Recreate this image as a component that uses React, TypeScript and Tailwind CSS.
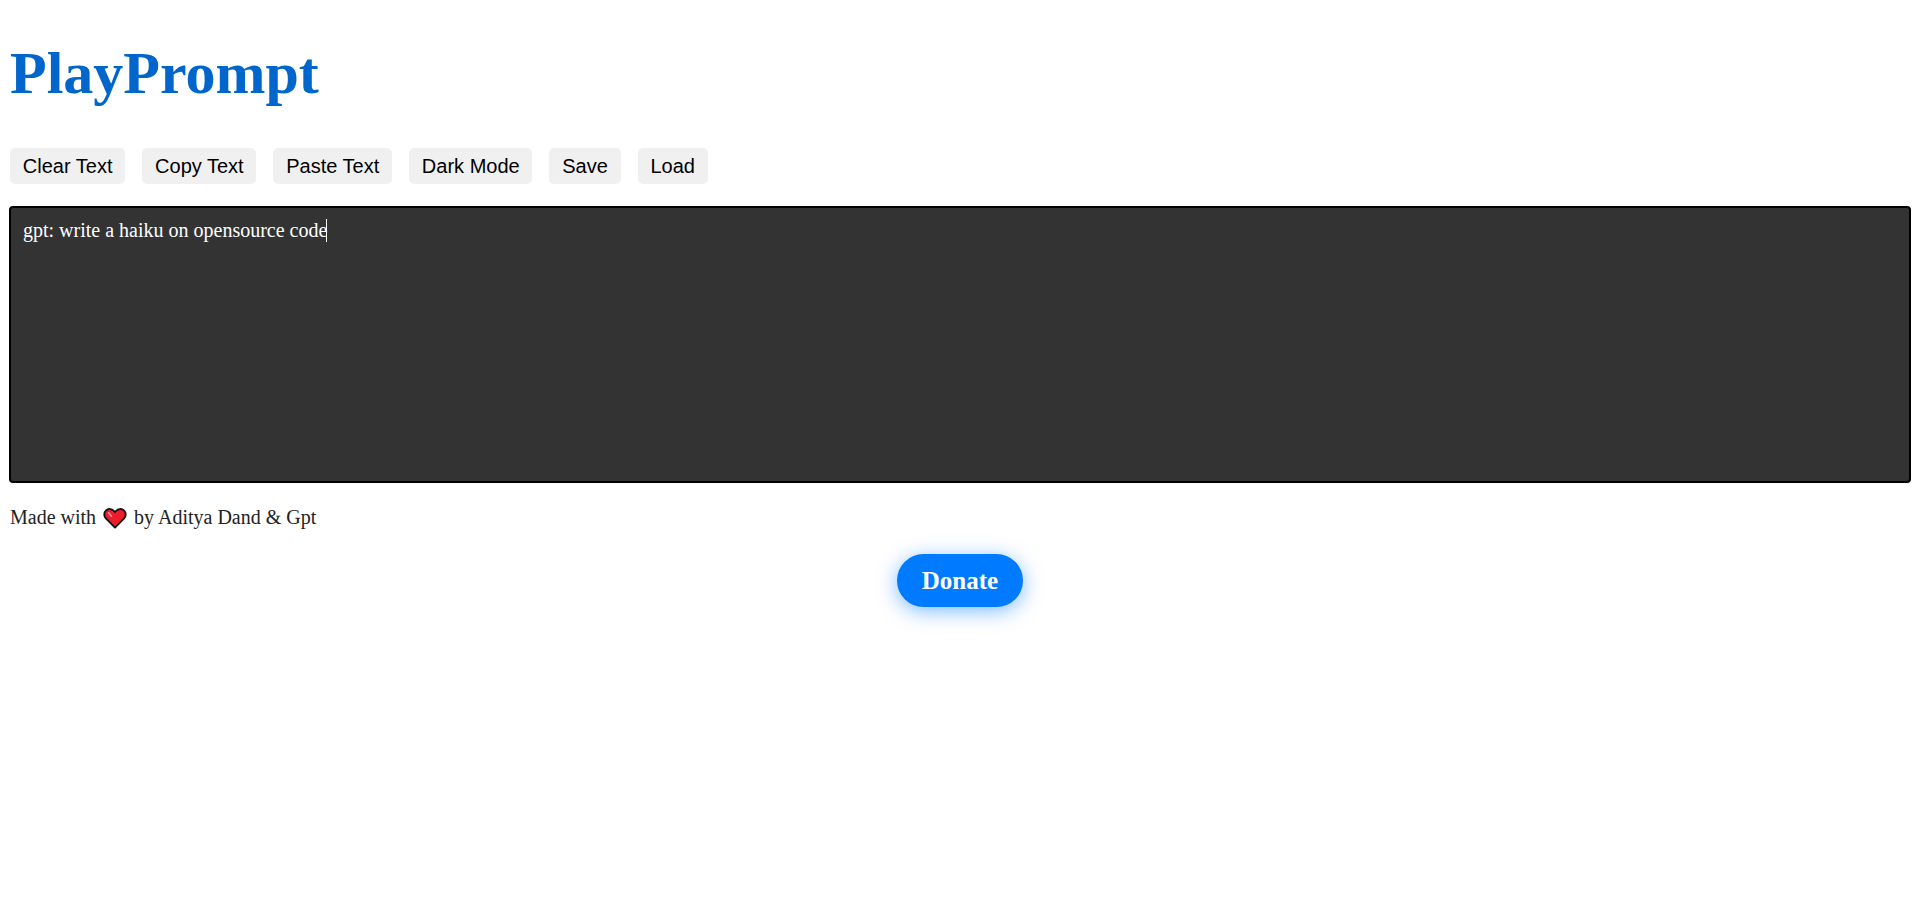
const buttons = ['Clear Text', 'Copy Text', 'Paste Text', 'Dark Mode', 'Save', 'Load']

function Heart() {
    return (
        <svg viewBox="0 0 26 24" className="mx-[7px] h-[22px] w-[24px]">
            <path
                d="M13 22.5 3 12.5C.6 10 .8 6 3.2 3.7 5.8 1.3 9.8 1.6 13 5.4 16.2 1.6 20.2 1.3 22.8 3.7 25.2 6 25.4 10 23 12.5Z"
                fill="#ed1c2b"
                stroke="#111"
                strokeWidth="2"
                strokeLinejoin="round"
            />
            <path d="M6 6.5 9 10" stroke="#f78b8b" strokeWidth="2" strokeLinecap="round" />
        </svg>
    )
}

export default function App() {
    return (
        <div className="min-h-[915px] bg-white px-[10px] font-['Liberation_Serif',serif]">
            <h1 className="pt-[35px] text-[60px] leading-[77px] font-bold text-[#0066cc]">PlayPrompt</h1>
            <div className="mt-[36px] flex gap-[17px]">
                {buttons.map((label) => (
                    <button
                        key={label}
                        className="h-[36px] rounded-[5px] bg-[#f0f0f0] px-[12.8px] font-['Liberation_Sans',sans-serif] text-[20px] text-black"
                    >
                        {label}
                    </button>
                ))}
            </div>
            <div className="mx-[-1px] mt-[22px] h-[277px] rounded-[4px] border-2 border-black bg-[#333333] px-[12px] py-[11px] text-[20px] leading-[23px] text-white">
                gpt: write a haiku on opensource code
                <span className="ml-[-1px] inline-block h-[23px] w-px bg-white align-top" />
            </div>
            <p className="mt-[23px] flex items-center text-[20px] leading-[23px] text-[#222222]">
                Made with <Heart /> by Aditya Dand &amp; Gpt
            </p>
            <div className="mt-[25px] flex justify-center">
                <button className="h-[53px] w-[126px] rounded-[30px] bg-[#007bff] text-[25px] leading-[51px] font-bold text-white shadow-[0_4px_20px_rgba(0,123,255,0.5)]">
                    Donate
                </button>
            </div>
        </div>
    )
}
